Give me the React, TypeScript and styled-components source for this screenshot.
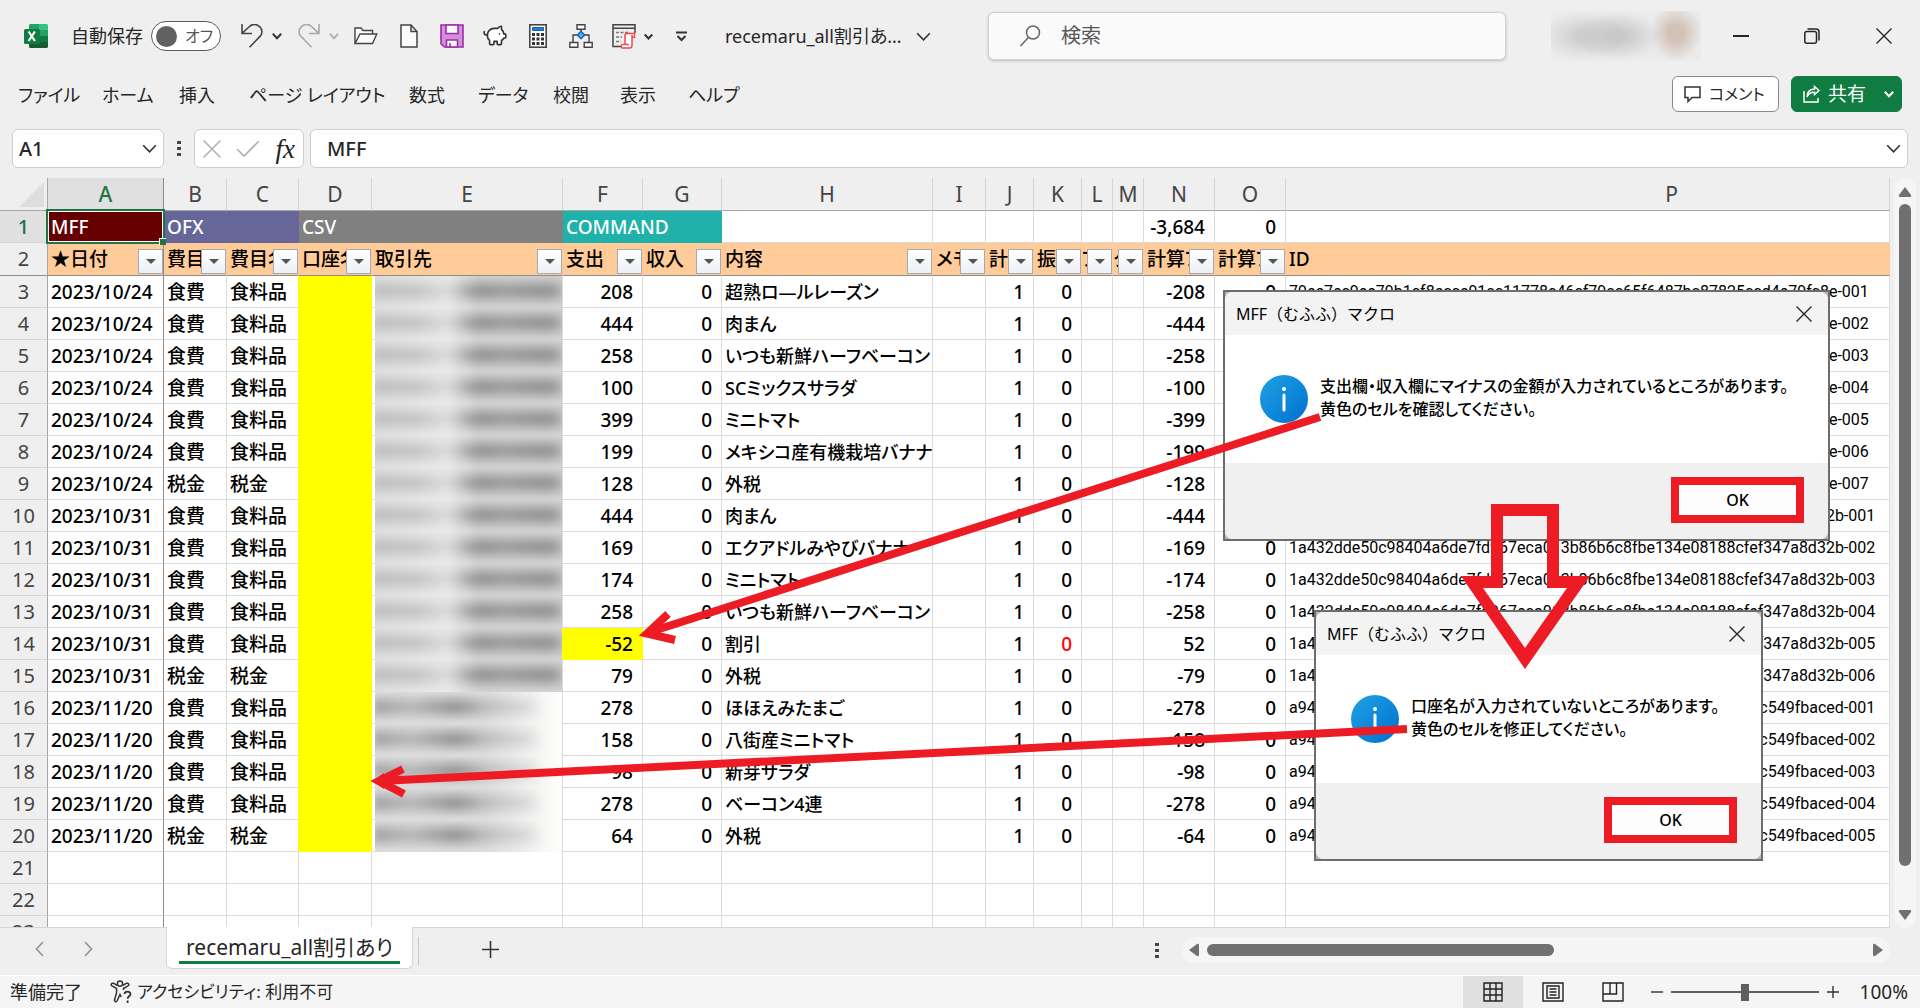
import React from "react";
import styled, { createGlobalStyle } from "styled-components";
import { PiggyBank } from "lucide-react";

const FONT = '"Noto Sans", "Noto Sans CJK JP", sans-serif';
const RED = "#ed1c24";
const INK = "#262626";
const GRID = "#dcdcdc";

const GlobalStyle = createGlobalStyle`
  *, *::before, *::after { box-sizing: border-box; }
  body { margin: 0; background: #efefef; overflow: hidden; }
  button, input { font: inherit; color: inherit; font-feature-settings: inherit; }
  button { background: none; border: 0; padding: 0; }
`;

const Window = styled.div`
  position: relative;
  display: flex;
  flex-direction: column;
  height: 100vh;
  overflow: hidden;
  background: #efefef;
  color: ${INK};
  font-family: ${FONT};
  font-size: 18px;
  line-height: 24px;
  font-feature-settings: "palt";
  white-space: nowrap;
`;

/* ---------- title bar ---------- */

const TitleBar = styled.header`
  flex: none;
  display: grid;
  grid-template-columns: 988px minmax(200px, 518px) 1fr;
  align-items: center;
  height: 72px;
`;

const QuickAccess = styled.div`
  display: flex;
  align-items: center;
  padding-left: 24px;
`;

const AutoSave = styled.label`
  display: flex;
  align-items: center;
  gap: 8px;
  width: 152px;
  margin: 0 18px 0 23px;
`;

const Toggle = styled.span`
  display: flex;
  align-items: center;
  gap: 8px;
  width: 70px;
  height: 30px;
  padding-left: 4px;
  border: 1px solid #5c5c5c;
  border-radius: 15px;
  background: #fff;
  color: #555;
  font-size: 16px;
`;

const ToggleInput = styled.input`
  appearance: none;
  flex: none;
  width: 21px;
  height: 21px;
  margin: 0;
  border-radius: 50%;
  background: #616161;
`;

const ToolButton = styled.button<{ $w: number }>`
  display: flex;
  align-items: center;
  flex: none;
  width: ${(p) => p.$w}px;
  height: 32px;
  color: #333;
`;

const DocName = styled.button`
  display: flex;
  align-items: center;
  gap: 14px;
  font-size: 18px;
`;

const SearchBox = styled.label`
  display: flex;
  align-items: center;
  gap: 18px;
  height: 48px;
  padding: 0 31px;
  border: 1px solid #d2d2d2;
  border-radius: 6px;
  background: #fafafa;
  box-shadow: 0 1px 3px rgba(0, 0, 0, 0.22);
`;

const SearchInput = styled.input`
  flex: 1;
  min-width: 0;
  border: 0;
  outline: 0;
  background: none;
  font-size: 20px;
  &::placeholder { color: #555; opacity: 1; }
`;

const WindowTools = styled.div`
  display: flex;
  justify-content: flex-end;
  align-items: center;
  padding-right: 28px;
`;

const Account = styled.div`
  flex: none;
  width: 150px;
  height: 50px;
  margin-right: 32px;
  background:
    radial-gradient(ellipse 26px 28px at 125px 22px, #d3c2b6 30%, transparent 100%),
    radial-gradient(ellipse 44px 24px at 66px 25px, #c9c9c9 20%, transparent 100%),
    radial-gradient(ellipse 44px 24px at 34px 25px, #cfcfcf 20%, transparent 100%),
    #ebebeb;
`;

/* ---------- menu row ---------- */

const MenuRow = styled.div`
  flex: none;
  display: flex;
  justify-content: space-between;
  align-items: center;
  height: 44px;
  padding: 0 18px;
`;

const Menu = styled.nav`
  display: flex;
  padding-top: 2px;
`;

const MenuItem = styled.button<{ $w: number }>`
  width: ${(p) => p.$w}px;
  text-align: left;
  font-size: 18px;
`;

const Actions = styled.div`
  display: flex;
  gap: 12px;
`;

const ActionButton = styled.button<{ $primary?: boolean }>`
  display: flex;
  align-items: center;
  gap: 8px;
  width: ${(p) => (p.$primary ? 111 : 107)}px;
  height: 36px;
  padding: 0 7px 0 11px;
  border: 1px solid ${(p) => (p.$primary ? "#107c41" : "#8a8a8a")};
  border-radius: 6px;
  background: ${(p) => (p.$primary ? "#107c41" : "#fff")};
  color: ${(p) => (p.$primary ? "#fff" : INK)};
  font-size: ${(p) => (p.$primary ? 19 : 16)}px;
  svg + svg, svg:nth-of-type(2) { margin-left: auto; }
`;

/* ---------- formula bar ---------- */

const FormulaRow = styled.div`
  flex: none;
  display: flex;
  align-items: flex-start;
  height: 62px;
  padding: 4px 12px 0;
`;

const Field = styled.div<{ $w?: number }>`
  display: flex;
  align-items: center;
  height: 39px;
  margin-top: 9px;
  flex: ${(p) => (p.$w ? "none" : "1")};
  width: ${(p) => (p.$w ? p.$w + "px" : "auto")};
  min-width: 0;
  padding: 0 6px;
  border: 1px solid #cfcfcf;
  border-radius: 6px;
  background: #fff;
  font-weight: 500;
`;

const FieldInput = styled.input<{ $indent?: boolean }>`
  flex: 1;
  min-width: 0;
  height: 100%;
  padding: 0 0 0 ${(p) => (p.$indent ? 10 : 0)}px;
  border: 0;
  outline: 0;
  background: none;
  font-size: 20px;
`;

const DotsSlot = styled.span`
  display: flex;
  justify-content: center;
  align-items: center;
  flex: none;
  width: 30px;
  height: 39px;
  margin-top: 9px;
`;

const FxGroup = styled(Field)`
  justify-content: space-between;
  margin-right: 6px;
  padding: 0 8px;
`;

const IconButton = styled.button`
  display: flex;
  align-items: center;
`;

const FxButton = styled.button`
  font-family: "Liberation Serif", serif;
  font-style: italic;
  font-weight: 400;
  font-size: 27px;
  color: #222;
`;

/* ---------- sheet ---------- */

const SheetArea = styled.main`
  flex: 1;
  min-height: 0;
  display: flex;
  overflow: hidden;
`;

const SheetClip = styled.div`
  flex: 1;
  min-width: 0;
  overflow: hidden;
  border-bottom: 1px solid #d6d6d6;
`;

const SheetPaper = styled.div`
  background: linear-gradient(#efefef 33px, #fff 33px);
`;

const Table = styled.table`
  width: 100%;
  table-layout: fixed;
  border-collapse: separate;
  border-spacing: 0;
  font-size: 19px;
  font-weight: 500;
  color: #000;
`;

const ColHead = styled.th<{ $active?: boolean; $wide?: boolean }>`
  height: 33px;
  padding: 0 0 0 ${(p) => (p.$wide ? 168 : 0)}px;
  border-bottom: 1px solid #a6a6a6;
  border-right: 1px solid ${(p) => (p.$active ? "#8c8c8c" : "#d4d4d4")};
  background: ${(p) => (p.$active ? "#e0e0e0" : "#efefef")};
  color: ${(p) => (p.$active ? "#217346" : "#444")};
  font-size: 21px;
  font-weight: ${(p) => (p.$active ? 500 : 400)};
`;

const Corner = styled.th`
  padding: 4px 3px 3px 19px;
  border-bottom: 1px solid #a6a6a6;
  border-right: 1px solid #a6a6a6;
  line-height: 0;
`;

const RowHead = styled.th<{ $active?: boolean; $frozen?: boolean }>`
  height: ${(p) => (p.$frozen ? 33 : 32)}px;
  padding: 0;
  border-right: 1px solid #a6a6a6;
  border-bottom: 1px solid ${(p) => (p.$frozen ? "#8c8c8c" : "#d4d4d4")};
  background: ${(p) => (p.$active ? "#e0e0e0" : "#efefef")};
  color: ${(p) => (p.$active ? "#217346" : "#444")};
  font-size: 20px;
  font-weight: ${(p) => (p.$active ? 500 : 400)};
`;

const Cell = styled.td<{
  $fill?: string;
  $right?: boolean;
  $color?: string;
  $frozenCol?: boolean;
  $frozenRow?: boolean;
  $size?: number;
  $pad?: number;
}>`
  position: relative;
  padding: 0 ${(p) => (p.$right ? 9 : 0)}px 0 ${(p) => p.$pad ?? 3}px;
  border-right: 1px solid ${(p) => (p.$frozenCol ? "#8c8c8c" : p.$fill ?? GRID)};
  border-bottom: 1px solid ${(p) => (p.$frozenRow ? "#8c8c8c" : p.$fill ?? GRID)};
  ${(p) => p.$fill && `background: ${p.$fill};`}
  ${(p) => p.$fill === "#ffff00" && "box-shadow: -1px 0 0 #ffff00;"}
  color: ${(p) => p.$color ?? "#000"};
  text-align: ${(p) => (p.$right ? "right" : "left")};
  ${(p) => p.$size && `font-size: ${p.$size}px;`}
`;

const HashCell = styled(Cell)`
  font-family: Roboto, ${FONT};
  font-size: 16px;
  font-weight: 400;
`;

const Selection = styled.span`
  position: absolute;
  z-index: 1;
  inset: -2px;
  border: 2px solid #217346;
  box-shadow: inset 0 0 0 1px #fff;
  &::after {
    content: "";
    position: absolute;
    right: -3px;
    bottom: -3px;
    width: 7px;
    height: 7px;
    background: #217346;
    border-top: 1px solid #fff;
    border-left: 1px solid #fff;
  }
`;

const FilterHead = styled.div`
  display: flex;
  align-items: flex-end;
  height: 32px;
`;

const FilterText = styled.span`
  flex: 1;
  min-width: 0;
  overflow: hidden;
  line-height: 32px;
`;

const FilterButton = styled.button`
  flex: none;
  display: flex;
  align-items: center;
  justify-content: center;
  width: 25px;
  height: 25px;
  margin-bottom: 1px;
  border: 1px solid #a2aab5;
  background: linear-gradient(#fff, #eceff6);
`;

const Redacted = styled.div<{ $short?: boolean }>`
  height: 32px;
  margin: 0 0 -1px 3px;
  position: relative;
  overflow: hidden;
  background: ${(p) =>
    p.$short
      ? "linear-gradient(90deg, #e0e0e0 60%, #f4f4f3 85%, #fdfdfb)"
      : "linear-gradient(90deg, #e0e0e0, #ebebeb 38%, #d6d6d6 55%)"};
  &::before {
    content: "";
    position: absolute;
    top: 7px;
    left: -4px;
    right: ${(p) => (p.$short ? 26 : -2)}px;
    height: 16px;
    filter: blur(6px);
    background: ${(p) =>
      p.$short
        ? "linear-gradient(90deg, #9c9c9c, #b4b4b4 25%, #8e8e8e 52%, #bcbcbc 70%, #dedede)"
        : "linear-gradient(90deg, #bcbcbc, #c4c4c4 25%, #dcdcdc 40%, #8e8e8e 55%, #9a9a9a 70%, #8c8c8c 92%, #acacac)"};
  }
`;

const VScroll = styled.div`
  flex: none;
  display: flex;
  flex-direction: column;
  align-items: center;
  justify-content: space-between;
  width: 22px;
  margin: 0 4px 0 4px;
  padding: 9px 0 8px;
  border-radius: 11px;
  background: #f5f5f5;
`;

const VThumb = styled.div`
  flex: 1;
  width: 12px;
  margin: 7px 0 44px;
  border-radius: 6px;
  background: #707070;
`;

/* ---------- tabs and status ---------- */

const TabRow = styled.footer`
  flex: none;
  display: flex;
  align-items: flex-start;
  height: 47px;
`;

const TabNav = styled.div`
  display: flex;
  align-items: center;
  gap: 40px;
  width: 166px;
  height: 42px;
  padding-left: 35px;
`;

const SheetTab = styled.button`
  width: 247px;
  height: 42px;
  margin-top: -1px;
  padding: 4px 12px 4px;
  border: 1px solid #d6d6d6;
  border-top: 0;
  border-radius: 0 0 6px 6px;
  background: #fff;
  font-size: 21px;
`;

const TabLabel = styled.span`
  display: block;
  height: 33px;
  line-height: 32px;
  border-bottom: 3px solid #107c41;
`;

const TabDivider = styled.span`
  width: 1px;
  height: 28px;
  margin: 9px 63px 0 5px;
  background: #c8c8c8;
`;

const AddSheet = styled.button`
  display: flex;
  align-items: center;
  height: 42px;
  margin-right: auto;
`;

const TabDots = styled.span`
  display: flex;
  align-items: center;
  height: 46px;
`;

const HScroll = styled.div`
  display: flex;
  align-items: center;
  gap: 8px;
  width: 708px;
  height: 26px;
  margin: 9px 30px 0 23px;
  padding: 0 7px;
  border-radius: 13px;
  background: #f5f5f5;
`;

const HThumb = styled.div`
  width: 50%;
  height: 12px;
  margin-right: auto;
  border-radius: 6px;
  background: #707070;
`;

const StatusBar = styled.footer`
  flex: none;
  display: flex;
  align-items: center;
  height: 33px;
  padding: 0 12px 0 10px;
  border-top: 1px solid #fff;
  background: #f5f5f5;
`;

const Accessibility = styled.span`
  display: flex;
  align-items: center;
  gap: 4px;
  margin: 0 auto 0 28px;
  font-size: 17px;
`;

const ViewButton = styled.button<{ $active?: boolean }>`
  display: flex;
  align-items: center;
  justify-content: center;
  width: 60px;
  height: 32px;
  background: ${(p) => (p.$active ? "#e0e0e0" : "none")};
`;

const ZoomRange = styled.input`
  appearance: none;
  width: 148px;
  height: 20px;
  margin: 0 8px;
  background: linear-gradient(#5f5f5f, #5f5f5f) center / 100% 2px no-repeat;
  &::-webkit-slider-thumb {
    appearance: none;
    width: 8px;
    height: 17px;
    background: #5f5f5f;
  }
`;

const ZoomOut = styled(IconButton)`
  margin-left: 8px;
`;

const ZoomValue = styled.span`
  width: 69px;
  text-align: right;
  font-size: 19px;
`;

/* ---------- message boxes ---------- */

const MessageBox = styled.section<{ $x: number; $y: number; $w: number }>`
  position: absolute;
  left: ${(p) => p.$x}px;
  top: ${(p) => p.$y}px;
  width: ${(p) => p.$w}px;
  border: 2px solid #6d6d6d;
  background: #b9b9b9;
  color: #000;
`;

const BoxInner = styled.div`
  overflow: hidden;
  border-radius: 8px;
  background: #fff;
`;

const BoxTitle = styled.div`
  display: flex;
  align-items: center;
  justify-content: space-between;
  height: 43px;
  padding: 0 16px 0 11px;
  background: #f3f3f3;
  font-size: 16px;
  font-feature-settings: normal;
`;

const BoxBody = styled.div`
  display: flex;
  align-items: flex-start;
  gap: 12px;
  height: 128px;
  padding: 40px 0 0 35px;
`;

const BoxMessage = styled.p`
  margin: 0;
  font-size: 16px;
  line-height: 23px;
  font-weight: 500;
`;

const BoxFooter = styled.div`
  display: flex;
  justify-content: flex-end;
  height: 76px;
  padding: 14px 24px 0 0;
  background: #f0f0f0;
`;

const OkButton = styled.button`
  width: 133px;
  height: 46px;
  border: 8px solid ${RED};
  background: #fdfdfd;
  font-size: 16px;
  font-weight: 500;
`;

const Annotations = styled.svg`
  position: absolute;
  left: 0;
  top: 0;
  pointer-events: none;
`;

/* ---------- icons ---------- */

const Chevron = ({ w = 10, sw = 2, color = "#333" }: { w?: number; sw?: number; color?: string }) => (
  <svg width={w} height={w} viewBox="0 0 10 10" fill="none" stroke={color} strokeWidth={(sw * 10) / w}>
    <path d="M.8 2.8 5 7.2 9.2 2.8" />
  </svg>
);

const Cross = ({ s = 16, color = INK }: { s?: number; color?: string }) => (
  <svg width={s} height={s} viewBox="0 0 16 16" stroke={color} strokeWidth="1.4">
    <path d="M.5.5l15 15M15.5.5l-15 15" />
  </svg>
);

const Dots = () => (
  <svg width="4" height="16" fill="#444">
    <path d="M0 0h4v3H0zM0 6h4v3H0zM0 12h4v3H0z" />
  </svg>
);

const ExcelLogo = () => (
  <svg width="24" height="24" viewBox="0 0 24 24">
    <path fill="#21a366" d="M5 1.5A1.5 1.5 0 0 1 6.500 0H15v6H5z" />
    <path fill="#33c481" d="M15 0h7.500A1.500 1.500 0 0 1 24 1.500V6h-9z" />
    <path fill="#107c41" d="M5 6h10v6H5zM15 12h9v6h-9z" />
    <path fill="#21a366" d="M15 6h9v6h-9z" />
    <path fill="#185c37" d="M5 12h10v6h9v4.500a1.500 1.500 0 0 1-1.500 1.500h-16A1.500 1.500 0 0 1 5 22.500z" />
    <rect y="5" width="16" height="15" rx="1.500" fill="#107c41" />
    <path stroke="#fff" strokeWidth="2.200" d="M4.600 7.500l6.300 9.500M10.900 7.500L4.600 17" />
  </svg>
);

const Undo = ({ flip, color }: { flip?: boolean; color: string }) => (
  <svg width="22" height="24" viewBox="0 0 22 24" fill="none" stroke={color} strokeWidth="1.600">
    <g transform={flip ? "translate(22 0) scale(-1 1)" : undefined}>
      <path d="M1 0v9.500h10M1.300 9.200 8.500 2.500C12-.6 16 .2 18.800 2.800c3 3 2.700 7 .2 9.600L8.500 23.300" />
    </g>
  </svg>
);

const Folder = () => (
  <svg width="24" height="18" viewBox="0 0 24 18" fill="#fafafa" stroke="#444" strokeWidth="1.400">
    <path d="M1 16.500V1h6l2 2.500h9.500V7M1 16.500 6 7h16.800l-4.300 9.500z" />
  </svg>
);

const NewFile = () => (
  <svg width="18" height="24" viewBox="0 0 18 24" fill="#fafafa" stroke="#444" strokeWidth="1.500">
    <path d="M1 1h10l6 6.500V23H1zM11 1v6.500h6" />
  </svg>
);

const Save = () => (
  <svg width="24" height="24" viewBox="0 0 24 24" fill="#d48edb" stroke="#9a2fa6" strokeWidth="1.600">
    <path d="M1 1h22v22H4.500L1 20z" />
    <path fill="#fafafa" d="M6 1h12v8.500H6zM6.500 16h11v7h-11z" />
    <path fill="#d48edb" d="M10 19v4" />
  </svg>
);

const Calculator = () => (
  <svg width="18" height="24" viewBox="0 0 18 24">
    <rect x=".8" y=".8" width="16.400" height="22.400" fill="#fff" stroke="#444" strokeWidth="1.600" />
    <path fill="#1e7fd4" stroke="#0f5ea8" d="M3.500 3.500h11v3h-11z" />
    <path fill="#333" d="M3 9h3v3H3zM7.500 9h3v3h-3zM12 9h3v3h-3zM3 13.500h3v3H3zM7.500 13.500h3v3h-3zM12 13.500h3v3h-3zM3 18h3v3H3zM7.500 18h3v3h-3zM12 18h3v3h-3z" />
  </svg>
);

const OrgChart = () => (
  <svg width="24" height="24" viewBox="0 0 24 24" fill="#fff" stroke="#444" strokeWidth="1.400">
    <path fill="none" d="M12 5v4M4 19v-8h16v8" />
    <path d="M8 .8h8v4.400H8zM.8 18.500h8v4.700h-8zM15.200 18.500h8v4.700h-8z" />
    <path fill="#5aa9e6" stroke="#1068b8" d="M12 7.300 15.700 11 12 14.700 8.300 11z" />
  </svg>
);

const FormScript = () => (
  <svg width="24" height="26" viewBox="0 0 24 26" fill="none">
    <path stroke="#444" strokeWidth="1.500" d="M9 23.500H1V1.800h22V10M1 5.300h22" />
    <path stroke="#777" strokeWidth="1.300" strokeDasharray="3 1.500" d="M4 9.500h14M4 14h6M4 18.500h5" />
    <path stroke="#f04a4a" strokeWidth="1.500" fill="#fff" d="M13 22V12.500c0-1.500 1-2 2-2h7.500v3.800H20V22c0 2-.6 3-2 3h-7.500c-1.600 0-1.600-3.500 0-3.500H17M20 14V12" />
  </svg>
);

const AccessIcon = () => (
  <svg width="23" height="24" viewBox="0 0 23 24" fill="none" stroke="#333" strokeWidth="1.500">
    <circle cx="10" cy="3.600" r="2.600" />
    <path d="M7.500 5.500 3.300 3.200C1.500 2.800.4 4.800 2 5.800L6.600 8.500v4L4.500 20c-.2 1.800 1.800 2.500 2.600.8L10 14.500l1.200 2.500M12.500 5.500l4.200-2.300c1.800-.4 2.900 1.600 1.300 2.600L13.400 8.500V10" />
    <path strokeWidth="1.800" d="M14.500 14c.2-3.300 6-3.300 6 0 0 2.200-2.900 2.300-2.900 4.800M17.600 20.500V23" />
  </svg>
);

const InfoIcon = () => (
  <svg width="48" height="48" viewBox="0 0 48 48">
    <defs>
      <linearGradient id="info" x1="0" y1="0" x2="1" y2="1">
        <stop offset="0" stopColor="#1fa2e4" />
        <stop offset="1" stopColor="#0070d0" />
      </linearGradient>
    </defs>
    <circle cx="24" cy="24" r="24" fill="url(#info)" />
    <circle cx="24" cy="14" r="2" fill="#fff" />
    <path d="M24 20v15" stroke="#fff" strokeWidth="3" strokeLinecap="round" />
  </svg>
);

/* ---------- data ---------- */

const COLS: [string, number | null][] = [
  ["A", 116], ["B", 63], ["C", 72], ["D", 73], ["E", 191], ["F", 80], ["G", 79], ["H", 211], ["I", 53],
  ["J", 48], ["K", 48], ["L", 31], ["M", 31], ["N", 71], ["O", 71], ["P", null],
];

const FILTERS = ["★日付", "費目", "費目名", "口座名", "取引先", "支出", "収入", "内容", "メモ", "計算", "振替", "フ", "ク", "計算フ", "計算フ"];

const ID_A = "79ee7ec9ee79b1cf8ecce91cc11778c46cf79cc65f6487bc87825ccd4e79fc8e";
const ID_B = "1a432dde50c98404a6de7fd967eca013b86b6c8fbe134e08188cfef347a8d32b";
const ID_C = "a94c07e2d51b8f36a9e47d20c5fb18637ae90d42cb75f18e06a3d9c549fbaced";

const D1 = "2023/10/24";
const D2 = "2023/10/31";
const D3 = "2023/11/20";

type Row = [string, string, string, number, string, string];
const ROWS: Row[] = [
  [D1, "食費", "食料品", 208, "超熟ロ―ルレーズン", ID_A + "-001"],
  [D1, "食費", "食料品", 444, "肉まん", ID_A + "-002"],
  [D1, "食費", "食料品", 258, "いつも新鮮ハーフベーコン", ID_A + "-003"],
  [D1, "食費", "食料品", 100, "SCミックスサラダ", ID_A + "-004"],
  [D1, "食費", "食料品", 399, "ミニトマト", ID_A + "-005"],
  [D1, "食費", "食料品", 199, "メキシコ産有機栽培バナナ", ID_A + "-006"],
  [D1, "税金", "税金", 128, "外税", ID_A + "-007"],
  [D2, "食費", "食料品", 444, "肉まん", ID_B + "-001"],
  [D2, "食費", "食料品", 169, "エクアドルみやびバナナ", ID_B + "-002"],
  [D2, "食費", "食料品", 174, "ミニトマト", ID_B + "-003"],
  [D2, "食費", "食料品", 258, "いつも新鮮ハーフベーコン", ID_B + "-004"],
  [D2, "食費", "食料品", -52, "割引", ID_B + "-005"],
  [D2, "税金", "税金", 79, "外税", ID_B + "-006"],
  [D3, "食費", "食料品", 278, "ほほえみたまご", ID_C + "-001"],
  [D3, "食費", "食料品", 158, "八街産ミニトマト", ID_C + "-002"],
  [D3, "食費", "食料品", 98, "新芽サラダ", ID_C + "-003"],
  [D3, "食費", "食料品", 278, "ベーコン4連", ID_C + "-004"],
  [D3, "税金", "税金", 64, "外税", ID_C + "-005"],
];

const MENU: [string, number][] = [
  ["ファイル", 84], ["ホーム", 77], ["挿入", 70], ["ページ レイアウト", 160], ["数式", 69],
  ["データ", 75], ["校閲", 67], ["表示", 68], ["ヘルプ", 60],
];

const ORANGE = "#ffcc99";
const YELLOW = "#ffff00";

const Sheet = () => (
  <Table>
    <colgroup>
      <col style={{ width: 48 }} />
      {COLS.map(([n, w]) => (
        <col key={n} style={w ? { width: w } : undefined} />
      ))}
    </colgroup>
    <thead>
      <tr>
        <Corner>
          <svg width="25" height="25"><path d="M25 0v25H0z" fill="#dedede" /></svg>
        </Corner>
        {COLS.map(([n], i) => (
          <ColHead key={n} $active={i === 0} $wide={n === "P"}>{n}</ColHead>
        ))}
      </tr>
    </thead>
    <tbody>
      <tr>
        <RowHead $active>1</RowHead>
        <Cell $fill="#660000" $color="#fff" $frozenCol>MFF<Selection /></Cell>
        <Cell $fill="#666699" $color="#fff" colSpan={2}>OFX</Cell>
        <Cell $fill="#808080" $color="#fff" colSpan={2}>CSV</Cell>
        <Cell $fill="#20b2aa" $color="#fff" colSpan={2}>COMMAND</Cell>
        {COLS.slice(7).map(([n]) => (
          <Cell key={n} $right={n !== "P"}>
            {n === "N" ? "-3,684" : n === "O" ? "0" : ""}
          </Cell>
        ))}
      </tr>
      <tr>
        <RowHead $frozen>2</RowHead>
        {FILTERS.map((t, i) => (
          <Cell key={i} $fill={ORANGE} $frozenRow $frozenCol={i === 0} $pad={t.length === 1 ? 0 : 3}>
            <FilterHead>
              <FilterText>{t}</FilterText>
              <FilterButton aria-label={t}>
                <svg width="10" height="5"><path d="M0 0h10L5 5z" fill="#555" /></svg>
              </FilterButton>
            </FilterHead>
          </Cell>
        ))}
        <Cell $fill={ORANGE} $frozenRow>ID</Cell>
      </tr>
      {ROWS.map(([date, cat, sub, out, name, id], i) => (
        <tr key={i}>
          <RowHead>{i + 3}</RowHead>
          <Cell $frozenCol>{date}</Cell>
          <Cell>{cat}</Cell>
          <Cell>{sub}</Cell>
          <Cell $fill={YELLOW} />
          <Cell $pad={0}><Redacted $short={i > 12} /></Cell>
          <Cell $right $fill={out < 0 ? YELLOW : undefined}>{out}</Cell>
          <Cell $right>0</Cell>
          <Cell $size={18}>{name}</Cell>
          <Cell />
          <Cell $right>1</Cell>
          <Cell $right $color={out < 0 ? "#ff0000" : undefined}>0</Cell>
          <Cell />
          <Cell />
          <Cell $right>{-out}</Cell>
          <Cell $right>0</Cell>
          <HashCell>{id}</HashCell>
        </tr>
      ))}
      {[21, 22, 23].map((n) => (
        <tr key={n}>
          <RowHead>{n}</RowHead>
          {COLS.map(([c], i) => (
            <Cell key={c} $frozenCol={i === 0} />
          ))}
        </tr>
      ))}
    </tbody>
  </Table>
);

const Message = ({ x, y, w, lines }: { x: number; y: number; w: number; lines: string[] }) => (
  <MessageBox $x={x} $y={y} $w={w} role="dialog" aria-label="MFF（むふふ）マクロ">
    <BoxInner>
      <BoxTitle>
        MFF（むふふ）マクロ
        <IconButton aria-label="閉じる"><Cross /></IconButton>
      </BoxTitle>
      <BoxBody>
        <InfoIcon />
        <BoxMessage>
          {lines[0]}
          <br />
          {lines[1]}
        </BoxMessage>
      </BoxBody>
      <BoxFooter>
        <OkButton>OK</OkButton>
      </BoxFooter>
    </BoxInner>
  </MessageBox>
);

export default function App() {
  return (
    <Window>
      <GlobalStyle />
      <TitleBar>
        <QuickAccess>
          <ExcelLogo />
          <AutoSave>
            自動保存
            <Toggle>
              <ToggleInput type="checkbox" role="switch" aria-label="自動保存" />
              オフ
            </Toggle>
          </AutoSave>
          <ToolButton $w={31} aria-label="元に戻す"><Undo color="#444" /></ToolButton>
          <ToolButton $w={26} aria-label="元に戻すの一覧"><Chevron /></ToolButton>
          <ToolButton $w={31} aria-label="やり直し"><Undo flip color="#a8a8a8" /></ToolButton>
          <ToolButton $w={25} aria-label="やり直しの一覧"><Chevron color="#b5b5b5" /></ToolButton>
          <ToolButton $w={46} aria-label="開く"><Folder /></ToolButton>
          <ToolButton $w={40} aria-label="新規"><NewFile /></ToolButton>
          <ToolButton $w={42} aria-label="保存"><Save /></ToolButton>
          <ToolButton $w={47} aria-label="貯金箱"><PiggyBank size={26} strokeWidth={1.5} fill="#fff" /></ToolButton>
          <ToolButton $w={40} aria-label="電卓"><Calculator /></ToolButton>
          <ToolButton $w={43} aria-label="組織図"><OrgChart /></ToolButton>
          <ToolButton $w={32} aria-label="フォーム"><FormScript /></ToolButton>
          <ToolButton $w={32} aria-label="フォームの一覧"><Chevron w={9} /></ToolButton>
          <ToolButton $w={49} aria-label="カスタマイズ">
            <svg width="11" height="11" fill="none" stroke="#333" strokeWidth="2"><path d="M0 1.500h11M1.500 5l4 4 4-4" /></svg>
          </ToolButton>
          <DocName>recemaru_all割引あ…<Chevron w={15} sw={1.6} /></DocName>
        </QuickAccess>
        <SearchBox>
          <svg width="21" height="22" viewBox="0 0 21 22" fill="none" stroke="#666" strokeWidth="1.500">
            <circle cx="13" cy="7.500" r="6.500" /><path d="M8.500 12.300.5 21" />
          </svg>
          <SearchInput placeholder="検索" aria-label="検索" />
        </SearchBox>
        <WindowTools>
          <Account />
          <ToolButton $w={71} aria-label="最小化"><svg width="16" height="2"><path d="M0 0h16v2H0z" fill={INK} /></svg></ToolButton>
          <ToolButton $w={72} aria-label="元のサイズに戻す">
            <svg width="16" height="16" fill="none" stroke={INK} strokeWidth="1.500">
              <rect x=".8" y="3.500" width="11.700" height="11.700" rx="2" /><path d="M3.500 1H12a3 3 0 0 1 3 3v8.500" />
            </svg>
          </ToolButton>
          <ToolButton $w={16} aria-label="閉じる"><Cross /></ToolButton>
        </WindowTools>
      </TitleBar>

      <MenuRow>
        <Menu>
          {MENU.map(([t, w]) => (
            <MenuItem key={t} $w={w}>{t}</MenuItem>
          ))}
        </Menu>
        <Actions>
          <ActionButton>
            <svg width="17" height="17" fill="none" stroke="#333" strokeWidth="1.500"><path d="M1 1h15v10.500H8L4 15.500v-4H1z" /></svg>
            コメント
          </ActionButton>
          <ActionButton $primary>
            <svg width="17" height="18" fill="none" stroke="#fff" strokeWidth="1.500">
              <path d="M1 6v11h14v-4M11.500 1.500l4.500 4-4.500 4V7.200C8 7 5.500 8.500 4 12c0-5 3-7.700 7.500-8z" />
            </svg>
            共有
            <Chevron color="#fff" />
          </ActionButton>
        </Actions>
      </MenuRow>

      <FormulaRow>
        <Field $w={152}>
          <FieldInput defaultValue="A1" aria-label="名前ボックス" />
          <Chevron w={15} sw={1.6} />
        </Field>
        <DotsSlot><Dots /></DotsSlot>
        <FxGroup $w={110}>
          <IconButton aria-label="キャンセル"><Cross s={18} color="#b0b0b0" /></IconButton>
          <IconButton aria-label="入力">
            <svg width="24" height="18" fill="none" stroke="#b0b0b0" strokeWidth="1.600"><path d="M1 9l7 7L23 1" /></svg>
          </IconButton>
          <FxButton>fx</FxButton>
        </FxGroup>
        <Field>
          <FieldInput $indent defaultValue="MFF" aria-label="数式バー" />
          <Chevron w={15} sw={1.6} />
        </Field>
      </FormulaRow>

      <SheetArea>
        <SheetClip><SheetPaper><Sheet /></SheetPaper></SheetClip>
        <VScroll>
          <svg width="14" height="10"><path d="M7 0l6 8c.5 1-.2 2-1 2H2C1 10 .5 9 1 8z" fill="#707070" /></svg>
          <VThumb />
          <svg width="14" height="10"><path d="M7 10l6-8c.5-1-.2-2-1-2H2C1 0 .5 1 1 2z" fill="#707070" /></svg>
        </VScroll>
      </SheetArea>

      <TabRow>
        <TabNav>
          <svg width="9" height="16" fill="none" stroke="#999" strokeWidth="1.800"><path d="M8 1L1.500 8 8 15" /></svg>
          <svg width="9" height="16" fill="none" stroke="#999" strokeWidth="1.800"><path d="M1 1l6.500 7L1 15" /></svg>
        </TabNav>
        <SheetTab><TabLabel>recemaru_all割引あり</TabLabel></SheetTab>
        <TabDivider />
        <AddSheet aria-label="新しいシート">
          <svg width="17" height="17" stroke="#333" strokeWidth="1.600"><path d="M8.500 0v17M0 8.500h17" /></svg>
        </AddSheet>
        <TabDots><Dots /></TabDots>
        <HScroll>
          <svg width="10" height="14"><path d="M0 7l8-6c1-.5 2 .2 2 1v10c0 1-1 1.500-2 1z" fill="#707070" /></svg>
          <HThumb />
          <svg width="10" height="14"><path d="M10 7L2 1C1 .5 0 1.200 0 2v10c0 1 1 1.500 2 1z" fill="#707070" /></svg>
        </HScroll>
      </TabRow>

      <StatusBar>
        準備完了
        <Accessibility><AccessIcon />アクセシビリティ: 利用不可</Accessibility>
        <ViewButton $active aria-label="標準">
          <svg width="20" height="20" fill="none" stroke="#222" strokeWidth="1.400"><path d="M1 1h18v18H1zM7 1v18M13 1v18M1 7h18M1 13h18" /></svg>
        </ViewButton>
        <ViewButton aria-label="ページ レイアウト">
          <svg width="22" height="20" fill="none" stroke="#222" strokeWidth="1.400"><path d="M1 1h20v18H1zM5 4h12v12H5zM7.500 7h7M7.500 10h7M7.500 13h7" /></svg>
        </ViewButton>
        <ViewButton aria-label="改ページ プレビュー">
          <svg width="22" height="20" fill="none" stroke="#222" strokeWidth="1.400"><path d="M1 1h20v18H1zM8 1v11M14.500 1v11H1" /></svg>
        </ViewButton>
        <ZoomOut aria-label="縮小"><svg width="12" height="12" stroke="#333" strokeWidth="1.400"><path d="M0 6h12" /></svg></ZoomOut>
        <ZoomRange type="range" aria-label="ズーム" defaultValue={50} />
        <IconButton aria-label="拡大"><svg width="12" height="12" stroke="#333" strokeWidth="1.400"><path d="M0 6h12M6 0v12" /></svg></IconButton>
        <ZoomValue>100%</ZoomValue>
      </StatusBar>

      <Message x={1223} y={290} w={607} lines={["支出欄・収入欄にマイナスの金額が入力されているところがあります。", "黄色のセルを確認してください。"]} />
      <Message x={1314} y={610} w={449} lines={["口座名が入力されていないところがあります。", "黄色のセルを修正してください。"]} />

      <Annotations width="1920" height="1008" fill="none" stroke={RED} strokeWidth="8" aria-hidden="true">
        <path d="M1320 417 650 632" />
        <path d="M668 614 647 633.500 675 640" />
        <path d="M641 635l12-12 6 14z" fill={RED} stroke="none" />
        <path d="M1407 729 380 781" />
        <path d="M403 769 379 781 404 794" />
        <path d="M372 781l12-8v16z" fill={RED} stroke="none" />
        <path
          fill={RED}
          stroke="none"
          fillRule="evenodd"
          d="M1491 504h68v72h31l-65 93-64-93h30zM1503 516v72h-20l42 60 42-60h-20v-72z"
        />
      </Annotations>
    </Window>
  );
}
